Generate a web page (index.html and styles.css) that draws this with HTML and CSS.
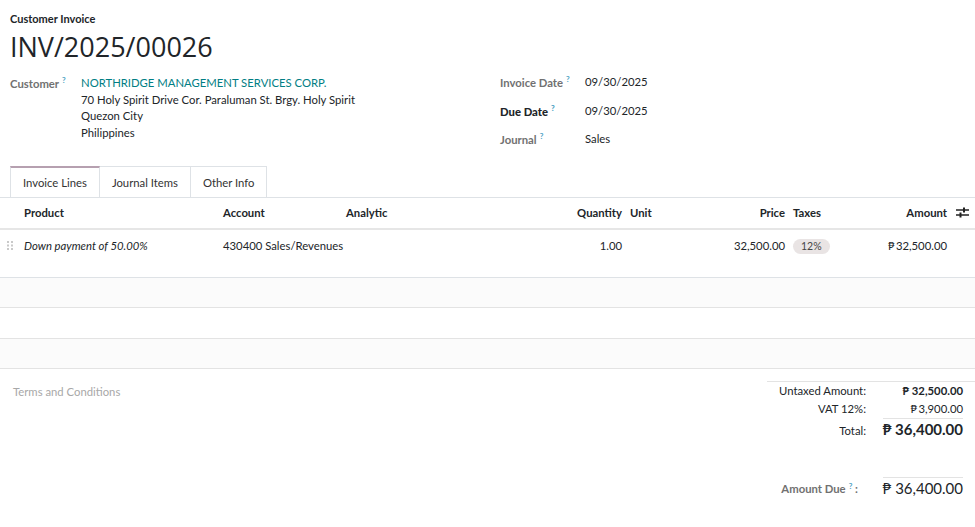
FILE: index.html
```html
<!DOCTYPE html>
<html lang="en">
<head>
<meta charset="UTF-8"/>
<title>INV/2025/00026</title>
<link rel="stylesheet" href="styles.css">
</head>
<body>

<div class="sheet">
  <div class="head">
    <div class="kind">Customer Invoice</div>
    <h1>INV/2025/00026</h1>
  </div>

  <div class="fields">
    <div class="col-left">
      <div class="field">
        <div class="label">Customer<sup>?</sup></div>
        <div class="value">
          <a href="#" class="link">NORTHRIDGE MANAGEMENT SERVICES CORP.</a>
          <div>70 Holy Spirit Drive Cor. Paraluman St. Brgy. Holy Spirit</div>
          <div>Quezon City</div>
          <div>Philippines</div>
        </div>
      </div>
    </div>
    <div class="col-right">
      <div class="field">
        <div class="label">Invoice Date<sup>?</sup></div>
        <div class="value">09/30/2025</div>
      </div>
      <div class="field">
        <div class="label strong">Due Date<sup>?</sup></div>
        <div class="value">09/30/2025</div>
      </div>
      <div class="field">
        <div class="label">Journal<sup>?</sup></div>
        <div class="value">Sales</div>
      </div>
    </div>
  </div>

  <div class="tabs">
    <div class="tab active">Invoice Lines</div>
    <div class="tab">Journal Items</div>
    <div class="tab">Other Info</div>
  </div>
</div>

<div class="lines">
  <div class="line-row th">
    <div></div>
    <div>Product</div>
    <div>Account</div>
    <div>Analytic</div>
    <div class="num">Quantity</div>
    <div>Unit</div>
    <div class="num">Price</div>
    <div>Taxes</div>
    <div class="num">Amount</div>
    <div class="opt">
      <svg width="13" height="11" viewBox="0 0 13 11"><path d="M0 3h13M0 8h13" stroke="#222" stroke-width="1.6"/><rect x="7" y="0.5" width="2" height="5" fill="#222"/><rect x="3.5" y="5.5" width="2" height="5" fill="#222"/></svg>
    </div>
  </div>
  <div class="line-row td">
    <div class="handle">
      <svg width="6" height="9" viewBox="0 0 6 9"><g fill="#c9c9c9"><rect x="0" y="0" width="2" height="2"/><rect x="4" y="0" width="2" height="2"/><rect x="0" y="3.5" width="2" height="2"/><rect x="4" y="3.5" width="2" height="2"/><rect x="0" y="7" width="2" height="2"/><rect x="4" y="7" width="2" height="2"/></g></svg>
    </div>
    <div class="italic">Down payment of 50.00%</div>
    <div>430400 Sales/Revenues</div>
    <div></div>
    <div class="num">1.00</div>
    <div></div>
    <div class="num">32,500.00</div>
    <div><span class="badge">12%</span></div>
    <div class="num">₱&#8201;32,500.00</div>
    <div></div>
  </div>
  <div class="empty grey"></div>
  <div class="empty"></div>
  <div class="empty grey"></div>
</div>

<div class="footer">
  <div class="terms">Terms and Conditions</div>
  <div class="totals">
    <div class="tot-row first">
      <div class="t-label">Untaxed Amount:</div>
      <div class="t-value bold">₱ 32,500.00</div>
    </div>
    <div class="tot-row">
      <div class="t-label">VAT 12%:</div>
      <div class="t-value">₱&#8201;3,900.00</div>
    </div>
    <div class="tot-row">
      <div class="t-label">Total:</div>
      <div class="t-value"><span class="big bold ruled">₱ 36,400.00</span></div>
    </div>
    <div class="tot-row due">
      <div class="t-label grey-label">Amount Due<sup>?</sup> :</div>
      <div class="t-value"><span class="big ruled">₱ 36,400.00</span></div>
    </div>
  </div>
</div>

</body>
</html>
```

FILE: styles.css
```css
*{box-sizing:border-box;margin:0;padding:0;}
body{font-family:'Lato','Open Sans',sans-serif;font-size:11.3px;color:#212529;background:#fff;width:975px;height:527px;overflow:hidden;}
sup{font-size:8px;color:#4fa3c4;vertical-align:top;position:relative;top:-3px;margin-left:3px;}

.sheet{padding:0 0 0 10px;}
.head{padding-top:11px;}
.kind{font-weight:700;font-size:11px;line-height:15px;}
h1{font-family:'Open Sans',sans-serif;font-size:27px;font-weight:500;line-height:34px;margin-top:4px;}

.fields{display:flex;margin-top:11px;}
.col-left{width:490px;}
.field{display:flex;}
.label{width:71px;color:#717171;font-weight:700;line-height:17px;}
.value{line-height:16.6px;}
.link{color:#017e84;text-decoration:none;display:block;}
.col-right .label{width:85px;}
.col-right .field{height:28.5px;}
.col-right .field:first-child{margin-top:-1px;}
.label.strong{color:#212529;font-weight:900;}

.tabs{display:flex;margin-top:6px;}
.tab{padding:0 12px;height:31px;line-height:31px;border:1px solid #dee2e6;border-bottom:none;border-left:none;color:#333;}
.tab.active{border-left:1px solid #dee2e6;border-top:2px solid #b6a0b0;line-height:29px;}

.lines{border-top:1px solid #dee2e6;}
.line-row{display:grid;grid-template-columns:20px 199px 123px 198px 86px 74px 89px 71px 91px 24px;}
.line-row>div{padding:0 4px;white-space:nowrap;}
.th{height:32px;align-items:center;font-weight:700;border-bottom:2px solid #e6e6e6;}
.td{height:48px;padding-top:7px;border-bottom:1px solid #dee2e6;}
.td>div{line-height:17px;}
.num{text-align:right;}
.italic{font-style:italic;}
.opt{display:flex;align-items:center;padding:0 !important;justify-content:center;}
.opt svg{margin-left:-2px;}
.handle{display:flex;align-items:center;height:17px;padding:0 0 0 7px !important;}
.badge{display:inline-block;background:#e9e4e4;border-radius:9px;padding:0 8px;font-size:10.5px;line-height:15px;color:#444;}
.empty{height:30.5px;border-bottom:1px solid #e3e3e3;}
.empty.grey{background:#fbfbfb;}

.footer{display:flex;justify-content:space-between;}
.terms{color:#a8a8a8;padding:16px 0 0 13px;}
.totals{width:208px;border-top:1px solid #e3e3e3;margin-top:12px;padding-right:12px;}
.tot-row{display:flex;justify-content:flex-end;align-items:flex-end;}
.t-label{text-align:right;line-height:18px;}
.t-value{text-align:right;line-height:18px;width:97px;}
.bold{font-weight:700;}
.big{display:inline-block;font-size:15px;line-height:18px;}
.ruled{border-top:1px solid #e3e3e3;margin-top:0;padding-top:1px;}
.due{margin-top:37px;}
.due .t-label{line-height:20px;padding-right:8px;}
.grey-label{color:#717171;font-weight:700;}
```
